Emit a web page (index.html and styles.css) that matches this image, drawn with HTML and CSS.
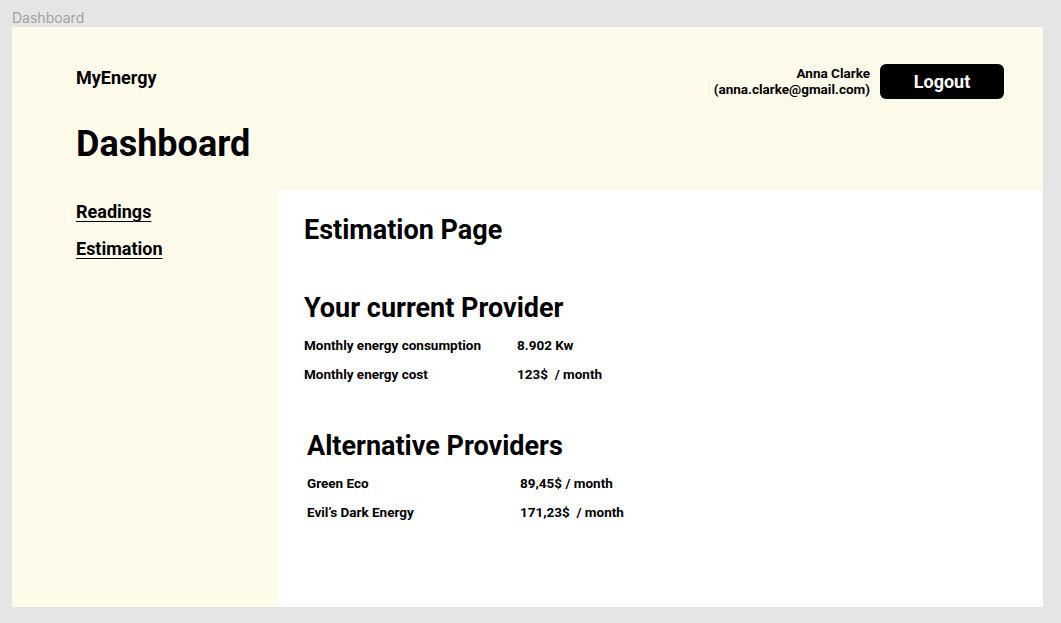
FILE: index.html
```html
<!DOCTYPE html>
<html>
<head>
<meta charset="utf-8">
<link rel="stylesheet" href="styles.css">
</head>
<body>
<div class="frame-label">Dashboard</div>
<div class="frame">
  <header class="top">
    <div class="top-row">
      <div class="brand">MyEnergy</div>
      <div class="user">
        <div class="user-info">
          <div>Anna Clarke</div>
          <div>(anna.clarke@gmail.com)</div>
        </div>
        <button class="logout">Logout</button>
      </div>
    </div>
    <h1 class="title">Dashboard</h1>
  </header>
  <div class="body">
    <nav class="sidebar">
      <a href="#" class="nav-link">Readings</a>
      <a href="#" class="nav-link">Estimation</a>
    </nav>
    <main class="main">
      <h2 class="page-title">Estimation Page</h2>
      <section class="section current">
        <h3 class="section-title">Your current Provider</h3>
        <div class="rows">
          <div class="row"><span class="label">Monthly energy consumption</span><span class="value">8.902 Kw</span></div>
          <div class="row"><span class="label">Monthly energy cost</span><span class="value">123$&nbsp; / month</span></div>
        </div>
      </section>
      <section class="section alt">
        <h3 class="section-title">Alternative Providers</h3>
        <div class="rows">
          <div class="row"><span class="label">Green Eco</span><span class="value">89,45$ / month</span></div>
          <div class="row"><span class="label">Evil’s Dark Energy</span><span class="value">171,23$&nbsp; / month</span></div>
        </div>
      </section>
    </main>
  </div>
</div>
</body>
</html>
```
FILE: styles.css
```css
* { box-sizing: border-box; }
html, body { margin: 0; padding: 0; }
body {
  background: #e5e5e5;
  font-family: Roboto, "Liberation Sans", sans-serif;
  color: #000;
  width: 1061px;
  height: 623px;
  overflow: hidden;
}
.frame-label {
  font-family: Inter, "Liberation Sans", sans-serif;
  font-size: 14px;
  color: #a3a3a3;
  padding: 9px 0 0 12px;
  height: 27px;
  line-height: 17px;
}
.frame {
  margin-left: 12px;
  width: 1031px;
  height: 580px;
  background: #fffbea;
  display: flex;
  flex-direction: column;
}
.top {
  height: 163px;
  padding: 37px 39px 0 64px;
}
.top-row {
  display: flex;
  justify-content: space-between;
  align-items: flex-start;
}
.brand {
  font-size: 18px;
  font-weight: 700;
  line-height: 22px;
  margin-top: 3px;
}
.user {
  display: flex;
  align-items: center;
  gap: 10px;
}
.user-info {
  text-align: right;
  font-size: 13.5px;
  font-weight: 700;
  line-height: 16px;
  margin-top: -1px;
}
.logout {
  width: 124px;
  height: 35px;
  border: none;
  border-radius: 6px;
  background: #000;
  color: #fff;
  font-family: Roboto, "Liberation Sans", sans-serif;
  font-size: 18px;
  font-weight: 700;
  cursor: pointer;
}
.title {
  margin: 23px 0 0;
  font-size: 36px;
  font-weight: 700;
  line-height: 44px;
}
.body {
  flex: 1;
  display: flex;
}
.sidebar {
  width: 266px;
  padding: 10px 0 0 64px;
  display: flex;
  flex-direction: column;
  gap: 14px;
}
.nav-link {
  color: #000;
  font-size: 18px;
  font-weight: 700;
  line-height: 23px;
  text-decoration: underline;
  text-decoration-thickness: 1px;
  text-underline-offset: 3px;
}
.main {
  flex: 1;
  background: #fff;
  padding: 24px 0 0 26px;
}
.page-title {
  margin: 0;
  font-size: 27px;
  font-weight: 700;
  line-height: 32px;
}
.section-title {
  margin: 0 0 13px;
  font-size: 27px;
  font-weight: 700;
  line-height: 32px;
}
.current { margin-top: 46px; }
.alt { margin-top: 48px; padding-left: 3px; }
.rows {
  display: flex;
  flex-direction: column;
  gap: 13px;
}
.row {
  display: grid;
  grid-template-columns: 213px auto;
  font-size: 13.5px;
  font-weight: 700;
  line-height: 16px;
}
```
